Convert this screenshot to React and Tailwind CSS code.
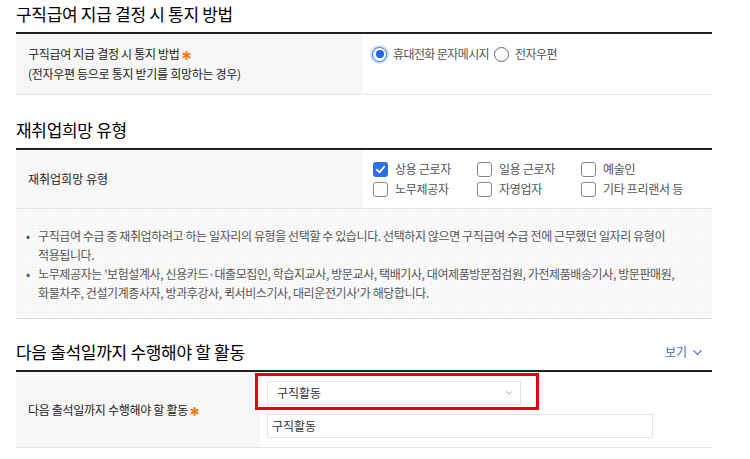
import React from "react";
import { ChevronDown } from "lucide-react";

const font = { fontFamily: '"Noto Sans CJK KR", "Noto Sans", sans-serif' };

const SectionTitle = ({ children, right }) => (
  <div className="flex items-center justify-between h-6 mb-[6px]">
    <h2 className="text-[17px] leading-6 font-normal text-[#000] tracking-[-0.3px]">{children}</h2>
    {right}
  </div>
);

// required mark: small bold orange asterisk
const Star = () => (
  <svg width="9" height="9" viewBox="0 0 10 10" className="ml-[2px] mt-[3px] shrink-0">
    <g stroke="#f07a1a" strokeWidth="2.2" strokeLinecap="round">
      <line x1="5" y1="1" x2="5" y2="9" />
      <line x1="1.5" y1="3" x2="8.5" y2="7" />
      <line x1="1.5" y1="7" x2="8.5" y2="3" />
    </g>
  </svg>
);

const Radio = ({ checked, label }) => (
  <label className="flex items-center gap-[6px] mr-[5px]">
    {checked ? (
      <span className="w-[15px] h-[15px] rounded-full border-[1.5px] border-[#2f6ee6] ring-2 ring-[#cfe0fb] flex items-center justify-center bg-white">
        <span className="w-[8px] h-[8px] rounded-full bg-[#1f63e6]" />
      </span>
    ) : (
      <span className="w-[15px] h-[15px] rounded-full border border-[#666] bg-white" />
    )}
    <span className="text-[12px] text-[#555] tracking-[-0.6px]">{label}</span>
  </label>
);

const Checkbox = ({ checked, label }) => (
  <label className="flex items-center gap-[7px] w-[104px] h-5">
    {checked ? (
      <span className="w-[15px] h-[15px] rounded-[3px] bg-[#2f6ee6] flex items-center justify-center">
        <svg width="11" height="11" viewBox="0 0 12 12" fill="none">
          <path d="M2 6.3 L4.9 9.1 L10 3" stroke="white" strokeWidth="2" strokeLinecap="round" strokeLinejoin="round" />
        </svg>
      </span>
    ) : (
      <span className="w-[15px] h-[15px] rounded-[3px] border border-[#888] bg-white" />
    )}
    <span className="text-[12px] text-[#555] whitespace-nowrap tracking-[-0.3px]">{label}</span>
  </label>
);

export default function App() {
  return (
    <div className="w-[750px] h-[459px] bg-white overflow-hidden" style={font}>
      <div className="ml-4 w-[696px] pt-[2px]">
        {/* 통지 방법 */}
        <SectionTitle>구직급여 지급 결정 시 통지 방법</SectionTitle>
        <div className="border-t-2 border-[#222] grid grid-cols-[347px_1fr] border-b border-b-[#e6e6e6]">
          <div className="bg-[#f7f7f7] px-3 py-[10px] text-[12px] leading-5 text-[#222] tracking-[-0.3px]">
            <p className="flex items-center">
              구직급여 지급 결정 시 통지 방법
              <Star />
            </p>
            <p>(전자우편 등으로 통지 받기를 희망하는 경우)</p>
          </div>
          <div className="pl-[9px] pt-[10px] flex items-start">
            <div className="flex items-center h-5">
              <Radio checked label="휴대전화 문자메시지" />
              <Radio label="전자우편" />
            </div>
          </div>
        </div>

        {/* 재취업희망 유형 */}
        <div className="mt-[23px]">
          <SectionTitle>재취업희망 유형</SectionTitle>
        </div>
        <div className="border-t-2 border-[#222] grid grid-cols-[347px_1fr] border-b border-b-[#e6e6e6]">
          <div className="bg-[#f7f7f7] px-3 flex items-center text-[12px] text-[#222]">재취업희망 유형</div>
          <div className="pl-[10px] py-[9px]">
            <div className="flex">
              <Checkbox checked label="상용 근로자" />
              <Checkbox label="일용 근로자" />
              <Checkbox label="예술인" />
            </div>
            <div className="flex">
              <Checkbox label="노무제공자" />
              <Checkbox label="자영업자" />
              <Checkbox label="기타 프리랜서 등" />
            </div>
          </div>
        </div>
        <div className="bg-[#fafafa] bg-[radial-gradient(#efefef_0.6px,transparent_0.7px)] bg-size-[3px_3px] border-b border-[#dcdcdc] pt-[17px] pb-[16px] pl-[10px] text-[12px] leading-[19px] text-[#555] tracking-[-0.4px]">
          <ul>
            <li className="flex">
              <span className="w-3 shrink-0">•</span>
              <span>
                구직급여 수급 중 재취업하려고 하는 일자리의 유형을 선택할 수 있습니다. 선택하지 않으면 구직급여 수급 전에 근무했던 일자리 유형이
                <br />
                적용됩니다.
              </span>
            </li>
            <li className="flex">
              <span className="w-3 shrink-0">•</span>
              <span>
                노무제공자는 '보험설계사, 신용카드·대출모집인, 학습지교사, 방문교사, 택배기사, 대여제품방문점검원, 가전제품배송기사, 방문판매원,
                <br />
                화물차주, 건설기계종사자, 방과후강사, 퀵서비스기사, 대리운전기사'가 해당합니다.
              </span>
            </li>
          </ul>
        </div>

        {/* 다음 출석일까지 수행해야 할 활동 */}
        <div className="mt-[21px]">
          <SectionTitle
            right={
              <button className="flex items-center gap-[3px] mr-[7px] text-[12px] text-[#4a6cb5]">
                보기
                <ChevronDown size={15} strokeWidth={1.8} />
              </button>
            }
          >
            다음 출석일까지 수행해야 할 활동
          </SectionTitle>
        </div>
        <div className="border-t-2 border-[#222] grid grid-cols-[244px_1fr] border-b border-b-[#e6e6e6]">
          <div className="bg-[#f7f7f7] px-3 flex items-center text-[12px] text-[#222] tracking-[-0.3px]">
            다음 출석일까지 수행해야 할 활동
            <Star />
          </div>
          <div className="relative pl-[7px] pt-[9px] pb-[9px] flex flex-col gap-[9px]">
            <div className="absolute left-[-5px] top-[1px] w-[284px] h-[37px] border-[3px] border-[#e60012] pointer-events-none" />
            <div className="w-[254px] h-6 border border-[#e5e5e5] bg-white flex items-center justify-between pl-[9px] pr-[6px] text-[12px] text-[#333]">
              구직활동
              <ChevronDown size={10} strokeWidth={1.5} className="text-[#666]" />
            </div>
            <div className="w-[386px] h-6 border border-[#e5e5e5] bg-white flex items-center pl-[4px] text-[12px] text-[#333]">
              구직활동
            </div>
          </div>
        </div>
      </div>
    </div>
  );
}
